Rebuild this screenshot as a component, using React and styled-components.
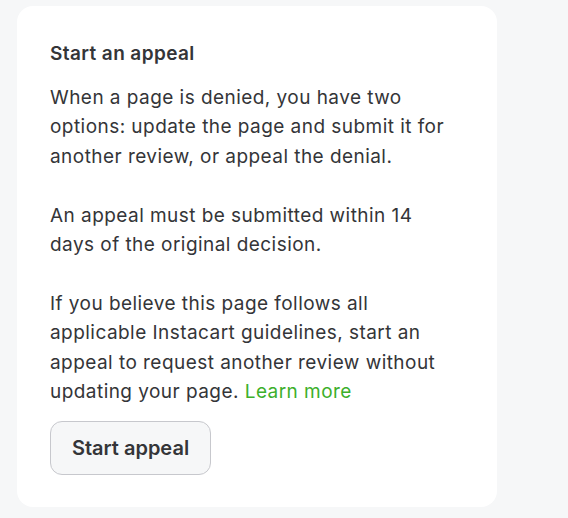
import styled, { createGlobalStyle } from "styled-components";

const Global = createGlobalStyle`
  body {
    margin: 0;
    background: #f6f7f8;
    font-family: Inter, "Noto Sans", sans-serif;
    color: #343538;
  }
`;

const Page = styled.div`
  padding: 6px 0 0 17px;
  min-height: 518px;
  box-sizing: border-box;
`;

const Card = styled.section`
  width: 480px;
  height: 501px;
  box-sizing: border-box;
  background: #ffffff;
  border-radius: 16px;
  padding: 33px 33px 0 33px;
`;

const Title = styled.h2`
  margin: 0 0 14px;
  font-size: 19px;
  line-height: 30px;
  font-weight: 600;
  letter-spacing: 0.4px;
`;

const Text = styled.p`
  margin: 0 0 29.4px;
  font-size: 19px;
  line-height: 29.4px;
  font-weight: 400;
  letter-spacing: 0.45px;
  white-space: nowrap;
  &:last-of-type {
    margin-bottom: 15px;
  }
`;

const Link = styled.a`
  color: #3caf2b;
  text-decoration: none;
`;

const Button = styled.button`
  width: 161px;
  height: 54px;
  box-sizing: border-box;
  border: 1px solid #c7c8cd;
  border-radius: 12px;
  background: #f6f7f8;
  color: #343538;
  font-family: inherit;
  font-size: 20px;
  font-weight: 600;
  padding: 0;
`;

const App = () => {
  return (
    <>
      <Global />
      <Page>
        <Card>
          <Title>Start an appeal</Title>
          <Text>
            When a page is denied, you have two
            <br />
            options: update the page and submit it for
            <br />
            another review, or appeal the denial.
          </Text>
          <Text>
            An appeal must be submitted within 14
            <br />
            days of the original decision.
          </Text>
          <Text>
            If you believe this page follows all
            <br />
            applicable Instacart guidelines, start an
            <br />
            appeal to request another review without
            <br />
            updating your page. <Link href="#">Learn more</Link>
          </Text>
          <Button>Start appeal</Button>
        </Card>
      </Page>
    </>
  );
};

export default App;
